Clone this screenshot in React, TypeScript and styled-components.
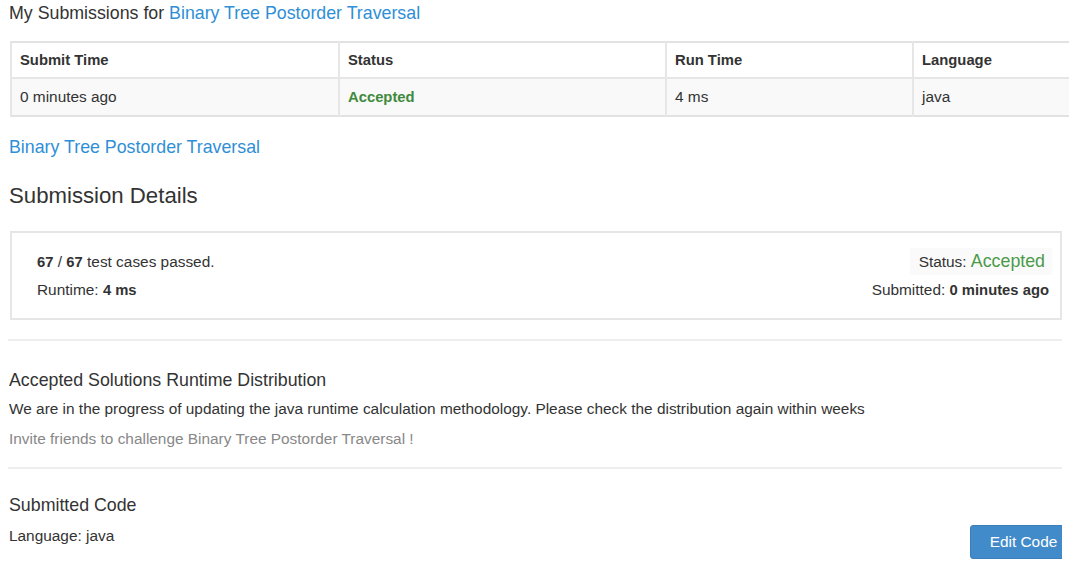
import React from "react";
import styled, { createGlobalStyle } from "styled-components";

const Global = createGlobalStyle`
  html, body { margin: 0; padding: 0; background: #fff; overflow: hidden; }
  body { font-family: "Liberation Sans", Arial, sans-serif; color: #333; font-size: 15.4px; }
  b { font-size: 14.8px; }
`;

const Page = styled.div`
  width: 1054px;
  padding: 0 7px 0 8px;
  display: flex;
  flex-direction: column;
`;

const Title = styled.div`
  font-size: 17.8px;
  line-height: 20px;
  padding: 3px 0 0 1px;
  color: #333;
`;

const Link = styled.a`
  color: #2f8fd6;
  text-decoration: none;
`;

const Table = styled.table`
  margin: 18px 0 0 2px;
  width: 1064px;
  table-layout: fixed;
  border-collapse: collapse;
  border: 2px solid #e2e2e2;
  border-right: none;
`;

const Th = styled.th`
  text-align: left;
  font-weight: bold;
  font-size: 14.8px;
  height: 34px;
  padding: 0 8px;
  border-left: 2px solid #e6e6e6;
  border-bottom: 2px solid #e6e6e6;
  color: #333;
`;

const Td = styled.td<{ $ok?: boolean }>`
  height: 36px;
  padding: 0 8px;
  background: #f9f9f9;
  border-left: 2px solid #e6e6e6;
  color: ${(p) => (p.$ok ? "#3f8a3c" : "#333")};
  font-weight: ${(p) => (p.$ok ? "bold" : "normal")};
  font-size: ${(p) => (p.$ok ? "14.8px" : "15.4px")};
`;

const ProblemLink = styled(Link)`
  align-self: flex-start;
  font-size: 17.8px;
  line-height: 20px;
  margin: 20px 0 0 1px;
`;

const Heading = styled.h3`
  margin: 27px 0 0 1px;
  font-size: 22.2px;
  line-height: 24px;
  font-weight: normal;
  color: #333;
`;

const Box = styled.div`
  margin: 23px 0 0 2px;
  width: 1052px;
  height: 89px;
  border: 2px solid #e6e6e6;
  display: flex;
  justify-content: space-between;
  padding: 0 11px 0 25px;
  box-sizing: border-box;
`;

const Col = styled.div<{ $right?: boolean }>`
  display: flex;
  flex-direction: column;
  align-items: ${(p) => (p.$right ? "flex-end" : "flex-start")};
  padding-top: ${(p) => (p.$right ? "15px" : "19px")};
`;

const Line = styled.div<{ $gap?: number }>`
  line-height: 20px;
  margin-top: ${(p) => p.$gap ?? 0}px;
`;

const StatusPill = styled.div`
  background: #fafafa;
  line-height: 27px;
  padding: 0 7px 0 9px;
  margin-right: -3px;
`;

const Green = styled.span`
  color: #4a9a4a;
  font-size: 17.8px;
`;

const Rule = styled.hr<{ $top: number }>`
  margin: ${(p) => p.$top}px 0 0 0;
  width: 1054px;
  border: none;
  border-top: 2px solid #eeeeee;
  height: 0;
`;

const SubHeading = styled.div<{ $top: number }>`
  font-size: 17.8px;
  line-height: 20px;
  margin: ${(p) => p.$top}px 0 0 1px;
  color: #333;
`;

const Text = styled.div<{ $top: number; $muted?: boolean }>`
  line-height: 20px;
  margin: ${(p) => p.$top}px 0 0 1px;
  color: ${(p) => (p.$muted ? "#888" : "#333")};
`;

const CodeRow = styled.div`
  display: flex;
  justify-content: space-between;
  align-items: flex-start;
  overflow: hidden;
  height: 100px;
`;

const Button = styled.button`
  flex: none;
  margin: 56px -15px 0 0;
  width: 107px;
  height: 34px;
  background: #428bca;
  border: 1px solid #3a7fbd;
  border-radius: 3px;
  color: #fff;
  font-family: "Liberation Sans", Arial, sans-serif;
  font-size: 15.4px;
  padding: 0;
`;

const cols = [328, 327, 247, 162];

export default function App() {
  return (
    <>
      <Global />
      <Page>
        <Title>
          My Submissions for <Link href="#">Binary Tree Postorder Traversal</Link>
        </Title>
        <Table>
          <colgroup>
            {cols.map((w, i) => (
              <col key={i} style={{ width: w }} />
            ))}
          </colgroup>
          <thead>
            <tr>
              <Th>Submit Time</Th>
              <Th>Status</Th>
              <Th>Run Time</Th>
              <Th>Language</Th>
            </tr>
          </thead>
          <tbody>
            <tr>
              <Td>0 minutes ago</Td>
              <Td $ok>Accepted</Td>
              <Td>4 ms</Td>
              <Td>java</Td>
            </tr>
          </tbody>
        </Table>
        <ProblemLink href="#">Binary Tree Postorder Traversal</ProblemLink>
        <Heading>Submission Details</Heading>
        <Box>
          <Col>
            <Line>
              <b>67</b> / <b>67</b> test cases passed.
            </Line>
            <Line $gap={8}>
              Runtime: <b>4 ms</b>
            </Line>
          </Col>
          <Col $right>
            <StatusPill>
              Status: <Green>Accepted</Green>
            </StatusPill>
            <Line $gap={5}>
              Submitted: <b>0 minutes ago</b>
            </Line>
          </Col>
        </Box>
        <Rule $top={19} />
        <SubHeading $top={29}>Accepted Solutions Runtime Distribution</SubHeading>
        <Text $top={9}>
          We are in the progress of updating the java runtime calculation methodology. Please check the distribution again within weeks
        </Text>
        <Text $top={10} $muted>
          Invite friends to challenge Binary Tree Postorder Traversal !
        </Text>
        <Rule $top={18} />
        <CodeRow>
          <div>
            <SubHeading $top={26}>Submitted Code</SubHeading>
            <Text $top={11}>Language: java</Text>
          </div>
          <Button>Edit Code</Button>
        </CodeRow>
      </Page>
    </>
  );
}
